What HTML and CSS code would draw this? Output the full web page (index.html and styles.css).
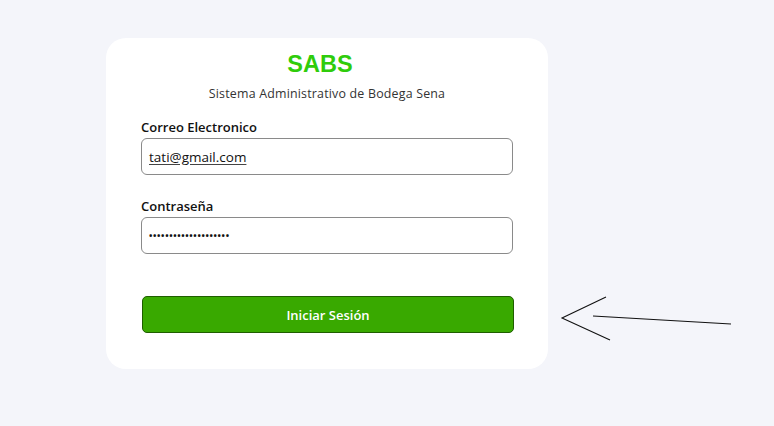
FILE: index.html
```html
<!DOCTYPE html>
<html lang="es">
<head>
<meta charset="utf-8">
<title>SABS</title>
<link rel="stylesheet" href="styles.css">
</head>
<body>
<div class="page">
  <div class="card">
    <h1 class="title">SABS</h1>
    <p class="subtitle">Sistema Administrativo de Bodega Sena</p>
    <div class="field">
      <label class="label">Correo Electronico</label>
      <div class="input"><span class="email">tati@gmail.com</span></div>
    </div>
    <div class="field field-pass">
      <label class="label">Contraseña</label>
      <div class="input"><span class="dots">••••••••••••••••••••</span></div>
    </div>
    <button class="btn">Iniciar Sesión</button>
  </div>
  <svg class="arrow" width="200" height="90" viewBox="0 0 200 90">
    <path d="M46 17 L2 38 L50 60" fill="none" stroke="#111" stroke-width="1.1"/>
    <path d="M33 36 L171 44" fill="none" stroke="#111" stroke-width="1.2"/>
  </svg>
</div>
</body>
</html>
```
FILE: styles.css
```css
html, body {
  margin: 0;
  padding: 0;
  background: #f4f5fa;
}
.page {
  position: relative;
  width: 774px;
  height: 426px;
  padding: 38px 0 0 106px;
  box-sizing: border-box;
}
.card {
  width: 442px;
  height: 331px;
  box-sizing: border-box;
  background: #fff;
  border-radius: 20px;
  padding: 12px 35px 0 35px;
  display: flex;
  flex-direction: column;
  font-family: "Open Sans", "Noto Sans", sans-serif;
}
.title {
  margin: 0;
  padding-right: 14px;
  text-align: center;
  font-family: "Liberation Sans", Arial, sans-serif;
  font-weight: bold;
  font-size: 23.5px;
  line-height: 28px;
  color: #2fcc0b;
}
.subtitle {
  margin: 8px 0 0 0;
  text-align: center;
  font-size: 12.4px;
  line-height: 16px;
  color: #333;
  letter-spacing: 0.2px;
}
.field {
  display: flex;
  flex-direction: column;
  margin-top: 16px;
}
.field-pass {
  margin-top: 22px;
}
.label {
  font-size: 13px;
  font-weight: 600;
  line-height: 18px;
  color: #111;
  margin-bottom: 2px;
}
.input {
  height: 37px;
  box-sizing: border-box;
  border: 1px solid #8a8a8a;
  border-radius: 6px;
  display: flex;
  align-items: center;
  padding-left: 7px;
  font-size: 13.5px;
  color: #111;
}
.email {
  text-decoration: underline;
  text-underline-offset: 2px;
  text-decoration-color: #444;
}
.dots {
  font-size: 9px;
  letter-spacing: 0.65px;
  font-weight: bold;
}
.btn {
  margin-top: 42px;
  height: 37px;
  width: 372px;
  margin-left: 1px;
  background: #39a900;
  border: 1px solid #1f5e00;
  border-radius: 5px;
  color: #fff;
  font-family: "Open Sans", "Noto Sans", sans-serif;
  font-size: 13px;
  font-weight: 600;
}
.arrow {
  position: absolute;
  left: 560px;
  top: 280px;
}
```
